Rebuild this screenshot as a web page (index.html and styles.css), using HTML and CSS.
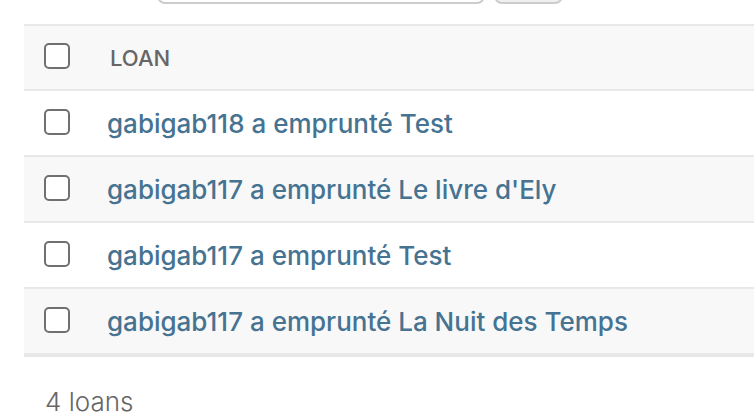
FILE: index.html
```html
<!DOCTYPE html>
<html lang="fr">
<head>
<meta charset="utf-8">
<title>Loans</title>
<link rel="stylesheet" href="styles.css">
</head>
<body>
<div class="page">
  <div class="toolbar">
    <input class="search" type="text" aria-label="Search">
    <button class="go" type="button" aria-label="Search"></button>
  </div>
  <table class="results">
    <thead>
      <tr>
        <th class="check"><input type="checkbox" class="box" aria-label="Select all"></th>
        <th class="col">Loan</th>
      </tr>
    </thead>
    <tbody>
      <tr class="row1">
        <td class="check"><input type="checkbox" class="box"></td>
        <th class="cell"><a href="#">gabigab118 a emprunté Test</a></th>
      </tr>
      <tr class="row2">
        <td class="check"><input type="checkbox" class="box"></td>
        <th class="cell"><a href="#">gabigab117 a emprunté Le livre d'Ely</a></th>
      </tr>
      <tr class="row1">
        <td class="check"><input type="checkbox" class="box"></td>
        <th class="cell"><a href="#">gabigab117 a emprunté Test</a></th>
      </tr>
      <tr class="row2 last">
        <td class="check"><input type="checkbox" class="box"></td>
        <th class="cell"><a href="#">gabigab117 a emprunté La Nuit des Temps</a></th>
      </tr>
    </tbody>
  </table>
  <p class="paginator">4 loans</p>
</div>
</body>
</html>
```
FILE: styles.css
```css
html, body {
  margin: 0;
  padding: 0;
  background: #fff;
  overflow: hidden;
}
body {
  font-family: Inter, Roboto, "Noto Sans", sans-serif;
  color: #333;
}
.page {
  padding-left: 24px;
}
.toolbar {
  display: flex;
  gap: 9px;
  margin-top: -32px;
  margin-left: 133px;
  margin-bottom: 20px;
  height: 36px;
}
.search {
  box-sizing: border-box;
  width: 328px;
  height: 36px;
  border: 2px solid #ccc;
  border-radius: 8px;
  background: #fff;
  margin: 0;
}
.go {
  box-sizing: border-box;
  width: 69px;
  height: 36px;
  border: 2px solid #ccc;
  border-radius: 8px;
  background: #f0f0f0;
  margin: 0;
}
.results {
  border-collapse: collapse;
  width: 100%;
}
.results thead th {
  background: #f8f8f8;
  border-top: 2px solid #e8e8e8;
  border-bottom: 2px solid #e8e8e8;
  height: 63px;
  padding: 0;
  text-align: left;
  vertical-align: middle;
}
.results tbody td,
.results tbody th {
  border-bottom: 2px solid #e8e8e8;
  height: 64px;
  padding: 0;
  text-align: left;
  vertical-align: middle;
}
.results tbody tr.last td,
.results tbody tr.last th {
  border-bottom-width: 4px;
}
.row2 {
  background: #f8f8f8;
}
.check {
  width: 83px;
  padding: 0 0 0 20px !important;
  box-sizing: border-box;
}
.box {
  appearance: none;
  -webkit-appearance: none;
  display: block;
  box-sizing: border-box;
  width: 26px;
  height: 26px;
  margin: -3px 0 0 0;
  border: 2px solid #707070;
  border-radius: 5px;
  background: #fff;
}
.col {
  font-size: 22px;
  font-weight: 500;
  color: #666;
  text-transform: uppercase;
  padding-left: 3px !important;
}
.cell {
  font-weight: 500;
  font-size: 26px;
}
.cell a {
  color: #457391;
  text-decoration: none;
}
.paginator {
  margin: 29px 0 0 21px;
  font-size: 26px;
  font-weight: 300;
  color: #666;
}
```
